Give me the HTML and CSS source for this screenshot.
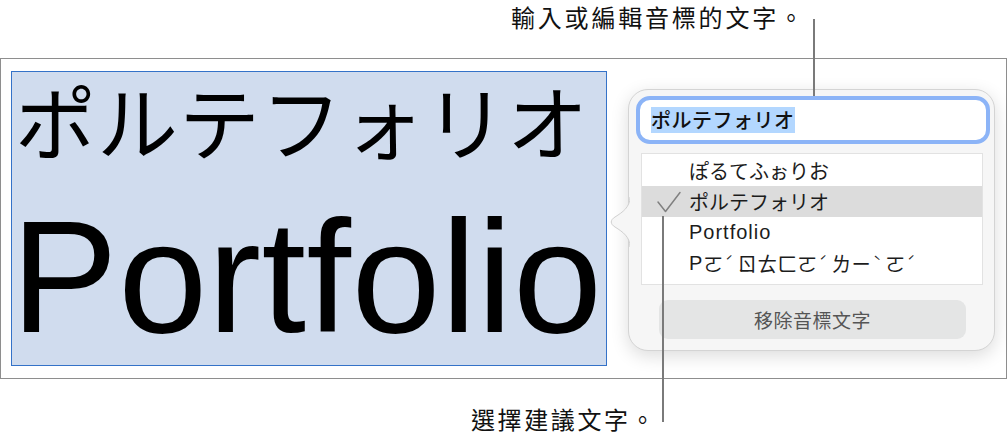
FILE: index.html
```html
<!DOCTYPE html>
<html lang="zh-Hant">
<head>
<meta charset="utf-8">
<title>音標文字</title>
<link rel="stylesheet" href="styles.css">
</head>
<body>
<div class="page">
  <div class="top-label">輸入或編輯音標的文字。</div>
  <div class="frame">
    <div class="selection">
      <div class="kana-big" lang="ja">ポルテフォリオ</div>
      <div class="latin-big">Portfolio</div>
    </div>
    <div class="popup">
      <svg class="pointer" width="23" height="50" viewBox="0 0 23 50">
        <path class="pointer-fill" d="M23 0 C23 10 16 15 8 20 C3 23 3 27 8 30 C16 35 23 40 23 50 Z"/>
        <path class="pointer-edge" d="M23 0 C23 10 16 15 8 20 C3 23 3 27 8 30 C16 35 23 40 23 50"/>
      </svg>
      <div class="field"><span class="field-sel" lang="ja">ポルテフォリオ</span></div>
      <ul class="choices">
        <li class="choice" lang="ja">ぽるてふぉりお</li>
        <li class="choice checked" lang="ja">
          <svg class="check" width="26" height="22" viewBox="0 0 26 22"><path d="M2 11 L9.5 20.5 L24 1.5"/></svg>
          ポルテフォリオ
        </li>
        <li class="choice latin">Portfolio</li>
        <li class="choice latin bopo">P<span class="zh">ㄛ<span class="tone">ˊ</span>ㄖㄊㄈㄛ<span class="tone">ˊ</span>ㄌㄧ<span class="tone">ˋ</span>ㄛ<span class="tone">ˊ</span></span></li>
      </ul>
      <div class="remove-btn">移除音標文字</div>
    </div>
  </div>
  <div class="bottom-label">選擇建議文字。</div>
  <div class="callout-line line-top"></div>
  <div class="callout-line line-bottom"></div>
</div>
</body>
</html>
```

FILE: styles.css
```css
html, body {
  margin: 0;
  padding: 0;
  background: #ffffff;
}

.page {
  position: relative;
  width: 1008px;
  height: 439px;
  overflow: hidden;
  font-family: "Noto Sans CJK TC", "Noto Sans", sans-serif;
  color: #111111;
}

.top-label {
  height: 58px;
  box-sizing: border-box;
  padding-left: 511px;
  padding-top: 2px;
  font-size: 24px;
  line-height: 30px;
  letter-spacing: 2.8px;
  white-space: nowrap;
}

.frame {
  width: 1007px;
  height: 321px;
  box-sizing: border-box;
  border: 1px solid #8e8e8e;
  display: flex;
  align-items: flex-start;
  padding: 12px 0 0 10px;
}

.selection {
  width: 596px;
  height: 295px;
  box-sizing: border-box;
  border: 1px solid #3472c8;
  background: #d0dcee;
  display: flex;
  flex-direction: column;
  color: #000000;
}

.kana-big {
  font-family: "Noto Sans CJK JP", sans-serif;
  font-size: 81px;
  line-height: 80px;
  margin-top: 7px;
  padding-left: 3px;
  letter-spacing: 1px;
  white-space: nowrap;
}

.latin-big {
  font-family: "Liberation Sans", Arial, sans-serif;
  font-size: 160px;
  line-height: 160px;
  margin-top: 38px;
  margin-left: -1px;
  letter-spacing: 0.5px;
  white-space: nowrap;
}

.popup {
  position: relative;
  margin-left: 21px;
  margin-top: 18px;
  width: 367px;
  height: 262px;
  box-sizing: border-box;
  border: 1px solid #d4d4d4;
  border-radius: 20px;
  background: #f6f6f6;
  box-shadow: 0 5px 18px rgba(0, 0, 0, 0.14);
  padding: 6px 0 0 7px;
  display: flex;
  flex-direction: column;
  align-items: flex-start;
}

.pointer {
  position: absolute;
  left: -22px;
  top: 107px;
}

.pointer-fill {
  fill: #f6f6f6;
}

.pointer-edge {
  fill: none;
  stroke: #d0d0d0;
  stroke-width: 1;
}

.field {
  width: 354px;
  height: 48px;
  box-sizing: border-box;
  border: 4px solid #8cb4f7;
  border-radius: 14px;
  background: #ffffff;
  display: flex;
  align-items: center;
  padding-left: 11px;
}

.field-sel {
  background: #b3d7ff;
  font-family: "Noto Sans CJK JP", sans-serif;
  font-size: 20px;
  line-height: 26px;
  font-weight: 500;
  letter-spacing: 0.5px;
  color: #111111;
}

.choices {
  list-style: none;
  margin: 9px 0 0 5px;
  padding: 1px 0;
  width: 342px;
  height: 132px;
  box-sizing: border-box;
  border: 1px solid #e2e2e2;
  background: #ffffff;
}

.choice {
  position: relative;
  height: 31px;
  display: flex;
  align-items: center;
  padding-left: 47px;
  font-family: "Noto Sans CJK JP", sans-serif;
  font-size: 20px;
  color: #1c1c1c;
  white-space: nowrap;
}

.choice.checked {
  background: #dcdcdc;
}

.check {
  position: absolute;
  left: 14px;
  top: 5px;
}

.check path {
  fill: none;
  stroke: #808080;
  stroke-width: 1.5;
  stroke-linecap: round;
  stroke-linejoin: round;
}

.choice.latin {
  font-family: "Liberation Sans", Arial, sans-serif;
  letter-spacing: 1px;
}

.bopo .zh {
  font-family: "Noto Sans CJK TC", sans-serif;
  letter-spacing: 0;
}

.bopo .tone {
  display: inline-block;
  width: 14px;
  font-size: 13px;
  vertical-align: 6px;
  text-align: left;
  padding-left: 2px;
  box-sizing: border-box;
}

.remove-btn {
  margin: 15px 0 0 23px;
  width: 307px;
  height: 39px;
  border-radius: 9px;
  background: #e4e5e5;
  display: flex;
  align-items: center;
  justify-content: center;
  font-size: 19px;
  letter-spacing: 0.5px;
  color: #555555;
}

.bottom-label {
  margin-top: 25px;
  padding-left: 471px;
  font-size: 24px;
  line-height: 30px;
  letter-spacing: 2.6px;
  white-space: nowrap;
}

.callout-line {
  position: absolute;
  width: 2px;
  background: #7a7a7a;
}

.line-top {
  left: 813px;
  top: 19px;
  height: 77px;
}

.line-bottom {
  left: 662px;
  top: 216px;
  height: 206px;
}
```
